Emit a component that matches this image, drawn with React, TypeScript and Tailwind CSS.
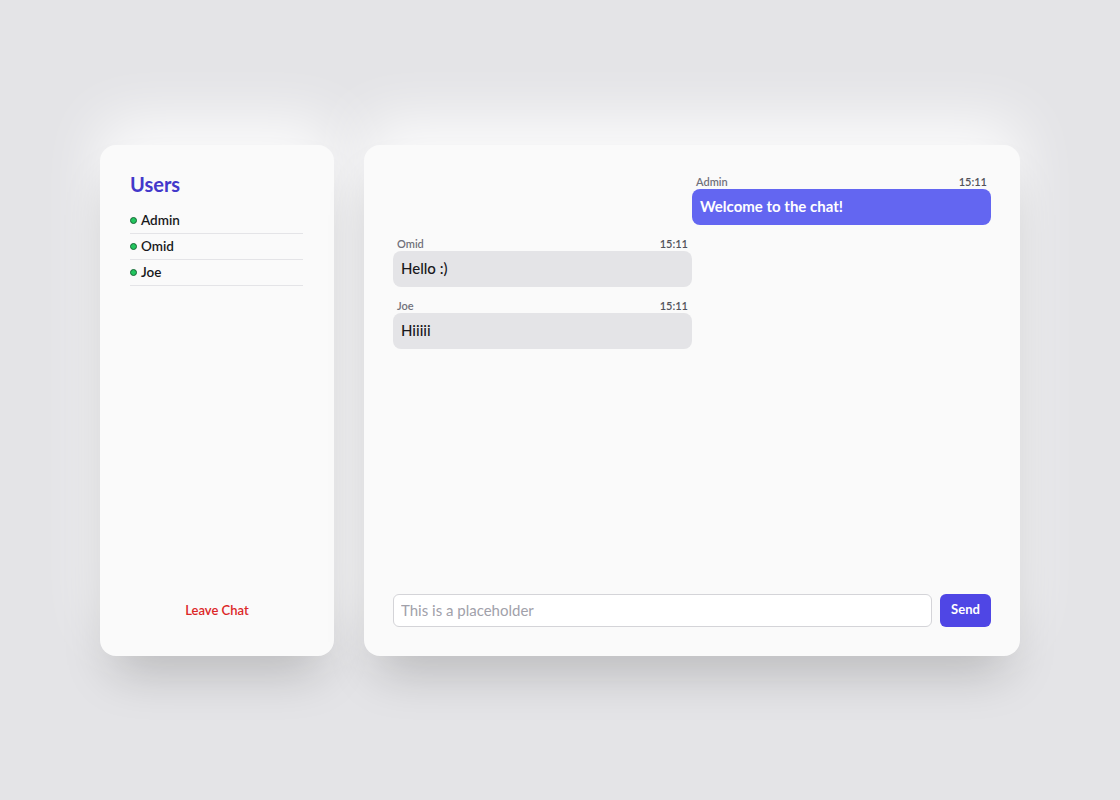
import React from "react";

type Message = { user: string; time: string; text: string; mine?: boolean };

const users = ["Admin", "Omid", "Joe"];

const messages: Message[] = [
  { user: "Admin", time: "15:11", text: "Welcome to the chat!", mine: true },
  { user: "Omid", time: "15:11", text: "Hello :)" },
  { user: "Joe", time: "15:11", text: "Hiiiii" },
];

const cardShadow =
  "shadow-[0_28px_50px_-14px_rgba(0,0,0,0.22),0_-24px_60px_rgba(255,255,255,0.9)]";

const App = () => {
  return (
    <div
      className="flex min-h-screen items-center justify-center bg-[#e4e4e7]"
      style={{ fontFamily: "Lato, 'Open Sans', sans-serif" }}
    >
      <div className="flex h-[511px] gap-[30px]">
        {/* users sidebar */}
        <div className={`flex w-[234px] flex-col rounded-2xl bg-[#fafafa] px-[30px] pt-[28px] pb-[35px] ${cardShadow}`}>
          <h2 className="text-[20px] font-bold leading-[22px] text-[#4338ca]">Users</h2>
          <ul className="mt-[13px] mr-px">
            {users.map((u) => (
              <li
                key={u}
                className="flex h-[26px] items-center gap-1 border-b border-[#e4e4e7] text-[13.5px] font-semibold text-[#18181b]"
              >
                <span className="h-[7px] w-[7px] rounded-full border border-[#166534] bg-[#22c55e]" />
                {u}
              </li>
            ))}
          </ul>
          <div className="flex-1" />
          <button className="self-center text-[13px] font-semibold text-[#dc2626]">Leave Chat</button>
        </div>

        {/* chat */}
        <div className={`flex w-[656px] flex-col rounded-2xl bg-[#fafafa] px-[29px] pt-[30px] pb-[29px] ${cardShadow}`}>
          <div className="flex flex-1 flex-col gap-[12px]">
            {messages.map((m, i) => (
              <div key={i} className={`flex w-[299px] flex-col ${m.mine ? "self-end" : "self-start"}`}>
                <div className="flex justify-between px-[4px] text-[11px] font-semibold leading-[14px]">
                  <span className="text-[#71717a]">{m.user}</span>
                  <span className="text-[#52525b]">{m.time}</span>
                </div>
                <div
                  className={`flex h-[36px] items-center rounded-lg px-[8px] text-[15px] ${
                    m.mine ? "bg-[#6366f1] font-bold text-white" : "bg-[#e4e4e7] font-medium text-[#18181b]"
                  }`}
                >
                  {m.text}
                </div>
              </div>
            ))}
          </div>
          <div className="flex gap-2">
            <input
              className="h-[33px] flex-1 rounded-md border border-[#d4d4d8] bg-white px-[7px] text-[15px] text-[#18181b] placeholder:text-[#a1a1aa] outline-none"
              placeholder="This is a placeholder"
            />
            <button className="h-[33px] w-[51px] rounded-md bg-[#4f46e5] text-[13px] font-bold text-white">Send</button>
          </div>
        </div>
      </div>
    </div>
  );
};

export default App;
